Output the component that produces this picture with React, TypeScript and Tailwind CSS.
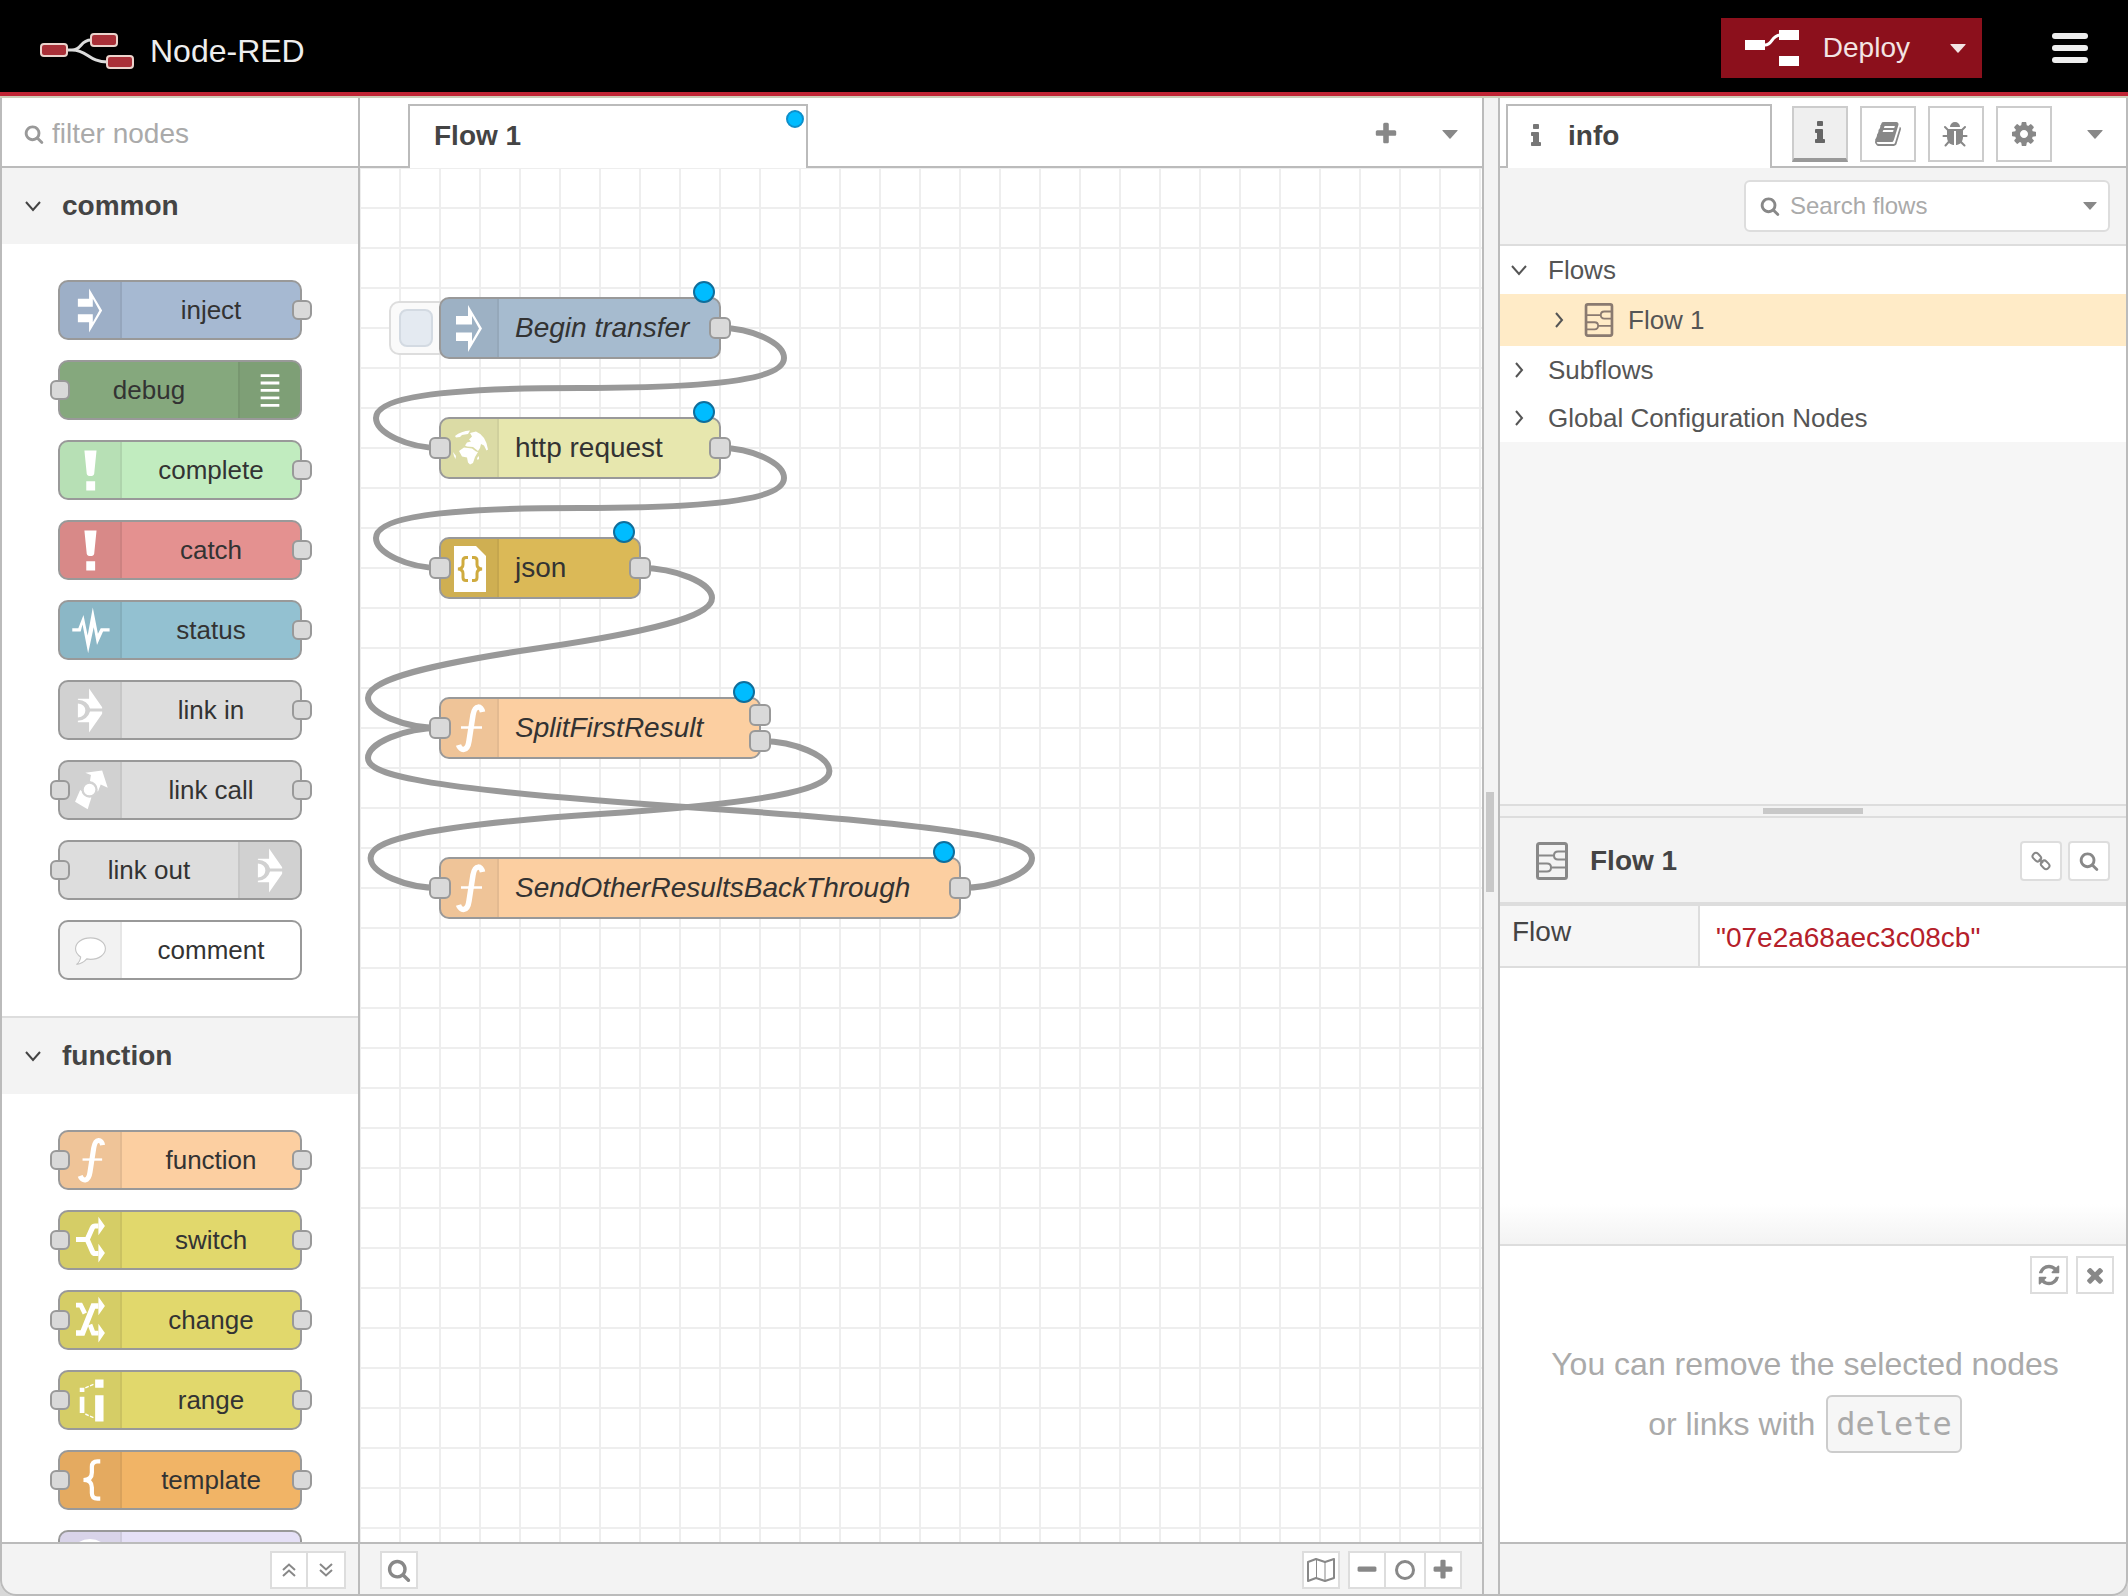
import type { ReactNode } from 'react'
import clsx from 'clsx'

type NodeIconName =
  | 'inject'
  | 'debug'
  | 'bang'
  | 'status'
  | 'link'
  | 'linkCall'
  | 'comment'
  | 'function'
  | 'switch'
  | 'change'
  | 'range'
  | 'template'
  | 'delay'
  | 'globe'
  | 'json'

type PaletteItem = {
  label?: string
  icon: NodeIconName
  color: string
  input?: boolean
  output?: boolean
  iconRight?: boolean
}

type FlowNode = {
  id: string
  label: string
  icon: NodeIconName
  color: string
  x: number
  y: number
  width: number
  italic?: boolean
  input?: boolean
  outputs: number[]
  button?: boolean
}

const NODE_HEIGHT = 60
const WIRE_UNIT = 200

const categories: { name: string; items: PaletteItem[] }[] = [
  {
    name: 'common',
    items: [
      { label: 'inject', icon: 'inject', color: 'bg-[#a6b9d2]', output: true },
      { label: 'debug', icon: 'debug', color: 'bg-[#85a87d]', input: true, iconRight: true },
      { label: 'complete', icon: 'bang', color: 'bg-[#c1ecbf]', output: true },
      { label: 'catch', icon: 'bang', color: 'bg-[#e49190]', output: true },
      { label: 'status', icon: 'status', color: 'bg-[#93c1d1]', output: true },
      { label: 'link in', icon: 'link', color: 'bg-[#dddddd]', output: true },
      { label: 'link call', icon: 'linkCall', color: 'bg-[#dddddd]', input: true, output: true },
      { label: 'link out', icon: 'link', color: 'bg-[#dddddd]', input: true, iconRight: true },
      { label: 'comment', icon: 'comment', color: 'bg-white' },
    ],
  },
  {
    name: 'function',
    items: [
      { label: 'function', icon: 'function', color: 'bg-[#fccfa1]', input: true, output: true },
      { label: 'switch', icon: 'switch', color: 'bg-[#e1d86c]', input: true, output: true },
      { label: 'change', icon: 'change', color: 'bg-[#e1d86c]', input: true, output: true },
      { label: 'range', icon: 'range', color: 'bg-[#e1d86c]', input: true, output: true },
      { label: 'template', icon: 'template', color: 'bg-[#f1b466]', input: true, output: true },
      { icon: 'delay', color: 'bg-[#e5e0f6]', input: true, output: true },
    ],
  },
]

// positions are relative to the top left corner of the canvas
const flowNodes: FlowNode[] = [
  { id: 'begin', label: 'Begin transfer', icon: 'inject', color: 'bg-[#a6bbcf]', x: 80, y: 130, width: 280, italic: true, outputs: [30], button: true },
  { id: 'http', label: 'http request', icon: 'globe', color: 'bg-[#e7e7ae]', x: 80, y: 250, width: 280, input: true, outputs: [30] },
  { id: 'json', label: 'json', icon: 'json', color: 'bg-[#dbb957]', x: 80, y: 370, width: 200, input: true, outputs: [30] },
  { id: 'split', label: 'SplitFirstResult', icon: 'function', color: 'bg-[#fccfa1]', x: 80, y: 530, width: 320, italic: true, input: true, outputs: [17, 43] },
  { id: 'send', label: 'SendOtherResultsBackThrough', icon: 'function', color: 'bg-[#fccfa1]', x: 80, y: 690, width: 520, italic: true, input: true, outputs: [30] },
]

const wires = [
  { from: 'begin', port: 0, to: 'http' },
  { from: 'http', port: 0, to: 'json' },
  { from: 'json', port: 0, to: 'split' },
  { from: 'send', port: 0, to: 'split' },
  { from: 'split', port: 1, to: 'send' },
]

// every wire here runs back to the left, so it loops round both ends
const wirePath = (x0: number, y0: number, x1: number, y1: number) => {
  const dx = x1 - x0
  const dy = y1 - y0
  const dir = dy > 0 ? 1 : -1
  const cp = NODE_HEIGHT / 2
  const near = Math.min(Math.abs(dx), Math.abs(dy))
  const scale = 0.4 - 0.2 * Math.max(0, (WIRE_UNIT - near) / WIRE_UNIT)
  const midX = Math.floor(x1 - dx / 2)
  const midY = Math.floor(y1 - dy / 2)
  const lowY = (y1 + midY) / 2
  const topX = x0 + WIRE_UNIT * scale
  const topY = dy > 0 ? Math.min(lowY - dy / 2, y0 + cp) : Math.max(lowY - dy / 2, y0 - cp)
  const bottomX = x1 - WIRE_UNIT * scale
  const bottomY = dy > 0 ? Math.max(lowY, y1 - cp) : Math.min(lowY, y1 + cp)
  const cx = (x0 + topX) / 2
  let topCp = dy > 0 ? Math.max(y0, topY - cp) : Math.min(y0, topY + cp)
  const midCp = dy > 0 ? Math.min(midY, topY + cp) : Math.max(midY, topY - cp)
  let bottomCp = dy > 0 ? Math.max(midY, bottomY - cp) : Math.min(midY, bottomY + cp)
  if (midCp === topY + dir * cp) {
    if (Math.abs(dy) < cp * 10) topCp = topY - (dir * cp) / 2
    bottomCp = bottomY - (dir * cp) / 2
  }
  return `M${x0} ${y0} C${cx} ${y0} ${topX} ${topCp} ${topX} ${topY} S${cx} ${midCp} ${midX} ${midY} S${bottomX} ${bottomCp} ${bottomX} ${bottomY} S${(x1 + bottomX) / 2} ${y1} ${x1} ${y1}`
}

const glyphs = {
  search:
    'M1216 832q0-185-131.5-316.5t-316.5-131.5-316.5 131.5-131.5 316.5 131.5 316.5 316.5 131.5 316.5-131.5 131.5-316.5zm512 832q0 52-38 90t-90 38q-54 0-90-38l-343-342q-179 124-399 124-143 0-273.5-55.5t-225-150-150-225-55.5-273.5 55.5-273.5 150-225 225-150 273.5-55.5 273.5 55.5 225 150 150 225 55.5 273.5q0 220-124 399l343 343q37 37 37 90z',
  info: 'M1216 1344v128q0 26-19 45t-45 19h-512q-26 0-45-19t-19-45v-128q0-26 19-45t45-19h64v-384h-64q-26 0-45-19t-19-45v-128q0-26 19-45t45-19h384q26 0 45 19t19 45v576h64q26 0 45 19t19 45zm-128-1152v192q0 26-19 45t-45 19h-256q-26 0-45-19t-19-45v-192q0-26 19-45t45-19h256q26 0 45 19t19 45z',
  book: 'M1703 478q40 57 18 129l-275 906q-19 64-76.5 107.5t-122.5 43.5h-923q-77 0-148.5-53.5t-99.5-131.5q-24-67-2-127 0-4 3-27t4-37q1-8-3-21.5t-3-19.5q2-11 8-21t16.5-23.5 16.5-23.5q23-38 45-91.5t30-91.5q3-10 .5-30t-.5-28q3-11 17-28t17-23q21-36 42-92t25-90q1-9-2.5-32t.5-28q4-13 22-30.5t22-22.5q19-26 42.5-84.5t27.5-96.5q1-8-3-25.5t-2-26.5q2-8 9-18t18-23 17-21q8-12 16.5-30.5t15-35 16-36 19.5-32 26.5-23.5 36-11.5 47.5 5.5l-1 3q38-9 51-9h761q74 0 114 56t18 130l-274 906q-36 119-71.5 153.5t-128.5 34.5h-869q-27 0-38 15-11 16-1 43 24 70 144 70h923q29 0 56-15.5t35-41.5l300-987q7-22 5-57 38 15 59 43zm-1064 2q-4 13 2 22.5t20 9.5h608q13 0 25.5-9.5t16.5-22.5l21-64q4-13-2-22.5t-20-9.5h-608q-13 0-25.5 9.5t-16.5 22.5zm-83 256q-4 13 2 22.5t20 9.5h608q13 0 25.5-9.5t16.5-22.5l21-64q4-13-2-22.5t-20-9.5h-608q-13 0-25.5 9.5t-16.5 22.5z',
  bug: 'M1632 1024q0 26-19 45t-45 19h-224q0 171-67 290l208 209q19 19 19 45t-19 45q-18 19-45 19t-45-19l-198-197q-5 5-15 13t-42 28.5-65 36.5-82 29-97 13v-896h-128v896q-51 0-101.5-13.5t-87-33-66-39-43.5-32.5l-15-14-183 207q-20 21-48 21-24 0-43-16-19-18-20.5-44.5t15.5-46.5l202-227q-58-114-58-274h-224q-26 0-45-19t-19-45 19-45 45-19h224v-294l-173-173q-19-19-19-45t19-45 45-19 45 19l173 173h844l173-173q19-19 45-19t45 19 19 45-19 45l-173 173v294h224q26 0 45 19t19 45zm-480-576h-640q0-133 93.5-226.5t226.5-93.5 226.5 93.5 93.5 226.5z',
  cog: 'M1152 896q0-106-75-181t-181-75-181 75-75 181 75 181 181 75 181-75 75-181zm512-109v222q0 12-8 23t-20 13l-185 28q-19 54-39 91 35 50 107 138 10 12 10 25t-9 23q-27 37-99 108t-94 71q-12 0-26-9l-138-108q-44 23-91 38-16 136-29 186-7 28-36 28h-222q-14 0-24.5-8.5t-11.5-21.5l-28-184q-49-16-90-37l-141 107q-10 9-25 9-14 0-25-11-126-114-165-168-7-10-7-23 0-12 8-23 15-21 51-66.5t54-70.5q-27-50-41-99l-183-27q-13-2-21-12.5t-8-23.5v-222q0-12 8-23t19-13l186-28q14-46 39-92-40-57-107-138-10-12-10-24 0-10 9-23 26-36 98.5-107.5t94.5-71.5q13 0 26 10l138 107q44-23 91-38 16-136 29-186 7-28 36-28h222q14 0 24.5 8.5t11.5 21.5l28 184q49 16 90 37l142-107q9-9 24-9 13 0 25 10 129 119 165 170 7 8 7 22 0 12-8 23-15 21-51 66.5t-54 70.5q26 50 41 98l183 28q13 2 21 12.5t8 23.5z',
  refresh:
    'M1639 1056q0 5-1 7-64 268-268 434.5t-478 166.5q-146 0-282.5-55t-243.5-157l-129 129q-19 19-45 19t-45-19-19-45v-448q0-26 19-45t45-19h448q26 0 45 19t19 45-19 45l-137 137q71 66 161 102t187 36q134 0 250-65t186-179q11-17 53-117 8-23 30-23h192q13 0 22.5 9.5t9.5 22.5zm25-800v448q0 26-19 45t-45 19h-448q-26 0-45-19t-19-45 19-45l138-138q-148-137-349-137-134 0-250 65t-186 179q-11 17-53 117-8 23-30 23h-199q-13 0-22.5-9.5t-9.5-22.5v-7q65-268 270-434.5t480-166.5q146 0 284 55.5t245 156.5l130-129q19-19 45-19t45 19 19 45z',
  times:
    'M1490 1322q0 40-28 68l-136 136q-28 28-68 28t-68-28l-294-294-294 294q-28 28-68 28t-68-28l-136-136q-28-28-28-68t28-68l294-294-294-294q-28-28-28-68t28-68l136-136q28-28 68-28t68 28l294 294 294-294q28-28 68-28t68 28l136 136q28 28 28 68t-28 68l-294 294 294 294q28 28 28 68z',
  plus: 'M1600 736v192q0 40-28 68t-68 28h-416v416q0 40-28 68t-68 28h-192q-40 0-68-28t-28-68v-416h-416q-40 0-68-28t-28-68v-192q0-40 28-68t68-28h416v-416q0-40 28-68t68-28h192q40 0 68 28t28 68v416h416q40 0 68 28t28 68z',
  minus: 'M1600 736v192q0 40-28 68t-68 28h-1216q-40 0-68-28t-28-68v-192q0-40 28-68t68-28h1216q40 0 68 28t28 68z',
}

const Glyph = ({ name, size }: { name: keyof typeof glyphs; size: number }) => (
  <svg width={size} height={size} viewBox="0 0 1792 1792" fill="currentColor" className="shrink-0" aria-hidden="true">
    <path d={glyphs[name]} />
  </svg>
)

const Caret = ({ width = 16 }: { width?: number }) => (
  <svg width={width} height={width / 2 + 1} viewBox="0 0 18 10" fill="currentColor" className="shrink-0" aria-hidden="true">
    <path d="M1 0h16q1 0 .4.9L9.6 9.6q-.6.6-1.2 0L.6.9Q0 0 1 0z" />
  </svg>
)

const Chevron = ({ open }: { open?: boolean }) => (
  <svg width="18" height="18" viewBox="0 0 18 18" fill="none" stroke="currentColor" strokeWidth="2" className="shrink-0" aria-hidden="true">
    <path d={open ? 'M2 5l7 8 7-8' : 'M6 2l6 7-6 7'} />
  </svg>
)

const FlowIcon = ({ className }: { className: string }) => (
  <svg viewBox="0 0 32 38" fill="none" stroke="currentColor" strokeWidth="2" className={clsx('shrink-0', className)} aria-hidden="true">
    <rect x="1.5" y="1.5" width="29" height="35" rx="2" strokeWidth="3" />
    <path d="M2 13.5h16M30 9.5h-8q-4 0-4 4t4 4h8" />
    <path d="M30 25.5H15M2 21.5h9q4 0 4 4t-4 4H2" />
  </svg>
)

const nodeIcons: Record<NodeIconName, ReactNode> = {
  inject: <path d="M17 18h12V7l14 23.500L29 54V43H17v-8.500h16V43l7-12.500L33 18v8.500H17z" />,
  debug: <path d="M20 13h20v3H20zM20 21h20v3H20zM20 29h20v3H20zM20 37h20v3H20zM20 45h20v3H20z" />,
  bang: <path d="M24 9h13l-2.500 25q-.5 2.500-4 2.500t-4-2.500zM26 42h9.500v10H26z" />,
  status: (
    <path d="M11 28h6.500L23 14l4.500 22L33 6l5.500 28 3-6H51v3.500h-7L37.500 46 34 27l-6 28-6-31-2 7.500h-9z" />
  ),
  link: (
    <>
      <path d="M17 18h12V7l14 20v1.500H30q-2.500-9-13-9.500z" />
      <path d="M17 43h12v11l14-20v-2.500H30q-2.500 9-13 10z" />
      <path d="M17 23q8 1 8 7.500T17 38z" />
    </>
  ),
  linkCall: (
    <>
      <path d="M25 11.500l18-2.500 6 18.500-7.500-3.500-3 8L30 20l1-6z" />
      <path d="M19.500 30L14 42.500l13.500 8 4-12.500z" />
      <circle cx="29.500" cy="29.500" r="7.500" stroke="#d2d2d2" strokeWidth="2.500" />
    </>
  ),
  comment: (
    <path
      d="M30.500 17c9 0 16 5 16 11.500S39.500 40 30.500 40q-2 0-4-.5-4 5-11 6 4-3 4.500-8-5.500-3.500-5.500-9C14.500 22 21.500 17 30.500 17z"
      stroke="#c4c4c4"
      strokeWidth="1.2"
    />
  ),
  function: (
    <g fill="none" stroke="currentColor">
      <path d="M43.500 14C42.500 8 36 6 34 17L30 43C28.500 54 21.500 53 19.500 47" strokeWidth="5.5" />
      <path d="M22 29.500h21" strokeWidth="2.500" />
    </g>
  ),
  switch: (
    <>
      <path d="M15 29.500h11M39 15h-3.500q-2 0-3 2L27 29.500 32.500 42q1 2.500 3 2.500H39" fill="none" stroke="currentColor" strokeWidth="5.5" />
      <path d="M39 5l7 10-7 10zM39 34l7 10-7 10z" />
    </>
  ),
  change: (
    <>
      <path d="M15 44h7l11.500-29H39" fill="none" stroke="currentColor" strokeWidth="6" />
      <path d="M15 14h5l4.500 9M30 35l3.500 9H39" fill="none" stroke="currentColor" strokeWidth="5" />
      <path d="M39 5l7 10-7 10zM39 34l7 10-7 10z" />
    </>
  ),
  range: (
    <>
      <path d="M19 17h5v4.500h-5zM19 26.500h5V44h-5zM35.500 8h9v9h-9zM35.500 25h9v28h-9z" />
      <path d="M25 17l9-4M25 45l9 4" fill="none" stroke="currentColor" strokeWidth="1.5" strokeDasharray="4 1.5" />
    </>
  ),
  template: (
    <path
      d="M41 10h-3q-6 0-6 6v6q0 8-9 8 9 0 9 8v6q0 6 6 6h3"
      fill="none"
      stroke="currentColor"
      strokeWidth="4.5"
    />
  ),
  delay: <circle cx="30" cy="30" r="20" fill="none" stroke="currentColor" strokeWidth="5" />,
  globe: (
    <>
      <path d="M16 18q6-5 15-5.500l-2 3.500-6 1-2 2-4 .5z" />
      <path d="M31 15l6-1.500q10 4 12 18l-1.500 1-2.500-5-3-1.500-1 4-2 3-5-4-6-.5-2-1 2-3 4-1-2-2 3-3z" />
      <path d="M20 33l5-3.500 8 1 4 3 2 .5-3 5-2 6-3 1.500-2-2-1-5-5-1z" />
      <path d="M14 34l3 4-.5 3q-2-3-2.500-7zM38 40l2-2v3l-1.500 1z" />
    </>
  ),
  json: (
    <>
      <path d="M15 8h22l10 10v36H15z" />
      <path
        d="M29 19.500h-2q-3 0-3 3v4q0 4-5 4.500 5 .5 5 4.500v4q0 3 3 3h2M33 19.500h2q3 0 3 3v4q0 4 5 4.500-5 .5-5 4.500v4q0 3-3 3h-2"
        fill="none"
        stroke="#cfab3f"
        strokeWidth="3"
      />
    </>
  ),
}

const NodeIcon = ({ name, className }: { name: NodeIconName; className: string }) => (
  <svg viewBox="0 0 60 60" fill="currentColor" className={clsx('shrink-0 text-white', className)} aria-hidden="true">
    {nodeIcons[name]}
  </svg>
)

const PaletteNode = ({ label, icon, color, input, output, iconRight }: PaletteItem) => (
  <li
    className={clsx(
      'relative flex h-[60px] w-[244px] rounded-[10px] border-2 border-[#999]',
      color,
      iconRight && 'flex-row-reverse',
    )}
  >
    <span
      className={clsx(
        'flex w-[62px] items-center justify-center border-black/5 bg-black/5',
        iconRight ? 'rounded-r-lg border-l-2' : 'rounded-l-lg border-r-2',
      )}
    >
      <NodeIcon name={icon} className="size-14" />
    </span>
    <span className="flex flex-1 items-center justify-center text-[26px] text-[#333]">{label}</span>
    {input ? <span className="absolute -left-[10px] top-[18px] size-5 rounded-md border-2 border-[#999] bg-[#d9d9d9]" /> : null}
    {output ? <span className="absolute -right-[12px] top-[18px] size-5 rounded-md border-2 border-[#999] bg-[#d9d9d9]" /> : null}
  </li>
)

const Header = () => (
  <header className="flex h-24 items-center justify-between border-b-4 border-[#c02434] bg-black px-10 pt-1">
    <div className="flex items-center gap-4 pt-1.5">
      <svg width="94" height="36" viewBox="0 0 94 36" aria-hidden="true">
        <path d="M28 17h4c10 0 8-10 19-10M32 17c16 0 16 12 36 12" fill="none" stroke="#dcdcdc" strokeWidth="3" />
        <g fill="#a93038" stroke="#ecd3cc" strokeWidth="2">
          <rect x="1" y="11" width="26" height="12" rx="3" />
          <rect x="51" y="1" width="26" height="12" rx="3" />
          <rect x="67" y="23" width="26" height="12" rx="3" />
        </g>
      </svg>
      <h1 className="text-[32px] text-[#eee]">Node-RED</h1>
    </div>
    <div className="flex items-center gap-[70px]">
      <div className="flex h-[60px] bg-[#8c101c] text-[#f3e4e4]">
        <button className="flex items-center gap-6 px-6 text-[28px]">
          <svg width="54" height="36" viewBox="0 0 54 36" fill="#fff" aria-hidden="true">
            <path d="M18 15h2c8 0 6-10 16-10" fill="none" stroke="#fff" strokeWidth="3" />
            <path d="M0 10h20v10H0zM34 0h20v10H34zM34 26h20v10H34z" />
          </svg>
          Deploy
        </button>
        <button className="flex w-12 items-center justify-center" aria-label="Deploy options">
          <Caret />
        </button>
      </div>
      <button className="flex flex-col gap-1.5" aria-label="Menu">
        <span className="h-1.5 w-9 rounded-sm bg-[#eee]" />
        <span className="h-1.5 w-9 rounded-sm bg-[#eee]" />
        <span className="h-1.5 w-9 rounded-sm bg-[#eee]" />
      </button>
    </div>
  </header>
)

const footerButton = 'flex h-[38px] w-[38px] items-center justify-center border-2 border-[#ddd] bg-white text-[#888]'

const Palette = () => (
  <aside className="flex w-[360px] shrink-0 flex-col overflow-hidden rounded-bl-2xl border-x-2 border-b-2 border-[#bbb] bg-[#f3f3f3]">
    <label className="flex h-[70px] shrink-0 items-center gap-2 border-b-2 border-[#bbb] bg-white pl-[22px] pt-1 text-[#999]">
      <Glyph name="search" size={20} />
      <input
        type="text"
        aria-label="filter nodes"
        placeholder="filter nodes"
        className="w-full min-w-0 bg-transparent text-[28px] outline-none placeholder:text-[#aaa]"
      />
    </label>
    <div className="min-h-0 flex-1 divide-y-2 divide-[#ddd] overflow-hidden bg-white">
      {categories.map((category) => (
        <section key={category.name}>
          <button className="flex h-[76px] w-full items-center gap-5 bg-[#f3f3f3] pl-[22px] text-[28px] font-bold text-[#444]">
            <Chevron open />
            {category.name}
          </button>
          <ul className="flex flex-col gap-5 py-9 pl-14">
            {category.items.map((item) => (
              <PaletteNode key={item.label ?? item.icon} {...item} />
            ))}
          </ul>
        </section>
      ))}
    </div>
    <footer className="flex h-[52px] shrink-0 items-center justify-end border-t-2 border-[#bbb] pr-3 pt-0.5">
      <button className={footerButton} aria-label="Collapse all">
        <svg width="14" height="14" viewBox="0 0 14 14" fill="none" stroke="currentColor" strokeWidth="2" aria-hidden="true">
          <path d="M1 7l6-5.500L13 7M1 13l6-5.500L13 13" />
        </svg>
      </button>
      <button className={clsx(footerButton, 'border-l-0')} aria-label="Expand all">
        <svg width="14" height="14" viewBox="0 0 14 14" fill="none" stroke="currentColor" strokeWidth="2" aria-hidden="true">
          <path d="M1 1l6 5.500L13 1M1 7l6 5.500L13 7" />
        </svg>
      </button>
    </footer>
  </aside>
)

const CanvasNode = ({ node }: { node: FlowNode }) => (
  <div className="absolute h-[62px]" style={{ left: node.x - 1, top: node.y - 1, width: node.width + 2 }}>
    {node.button ? (
      <button
        className="absolute -left-[50px] top-1 flex h-[54px] w-[66px] items-center rounded-[10px] border-2 border-[#ddd] bg-[#fafafa] pl-2"
        aria-label="Inject"
      >
        <span className="h-[38px] w-[34px] rounded-lg border-2 border-[#d3dae2] bg-[#e4eaf1]" />
      </button>
    ) : null}
    <div className={clsx('relative flex h-full rounded-[10px] border-2 border-[#999]', node.color)}>
      <span className="flex w-[58px] shrink-0 items-center justify-center rounded-l-lg border-r-2 border-black/5 bg-black/5">
        <NodeIcon name={node.icon} className="size-[60px]" />
      </span>
      <span className={clsx('flex items-center whitespace-nowrap pl-4 text-[28px] text-[#333]', node.italic && 'italic')}>
        {node.label}
      </span>
    </div>
    {node.input ? <span className="absolute -left-[10px] top-5 size-[22px] rounded-md border-2 border-[#999] bg-[#d9d9d9]" /> : null}
    {node.outputs.map((y) => (
      <span
        key={y}
        className="absolute -right-[10px] size-[22px] rounded-md border-2 border-[#999] bg-[#d9d9d9]"
        style={{ top: y - 10 }}
      />
    ))}
    <span className="absolute -top-4 right-[6px] size-[22px] rounded-full border-2 border-[#0f6e9c] bg-[#00bcff]" />
  </div>
)

const Workspace = () => {
  const byId = (id: string) => flowNodes.find((node) => node.id === id)!

  return (
    <main className="flex min-w-0 flex-1 flex-col border-b-2 border-r-2 border-[#bbb] bg-white">
      <div className="flex h-[70px] shrink-0">
        <div className="w-12 border-b-2 border-[#bbb]" />
        <div className="flex w-[400px] flex-col pt-1.5">
          <button className="relative flex flex-1 items-center border-x-2 border-t-2 border-[#bbb] bg-white pb-0.5 pl-6 text-[28px] font-bold text-[#444]">
            Flow 1
            <span className="absolute right-0.5 top-1 size-[18px] rounded-full border-2 border-[#0f8fca] bg-[#00bcff]" />
          </button>
        </div>
        <div className="flex flex-1 justify-end border-b-2 border-[#bbb] pt-1 text-[#888]">
          <button className="flex w-16 items-center justify-center" aria-label="Add flow">
            <Glyph name="plus" size={26} />
          </button>
          <button className="flex w-16 items-center justify-center" aria-label="List flows">
            <Caret />
          </button>
        </div>
      </div>
      <div className="relative min-h-0 flex-1 overflow-hidden bg-[linear-gradient(to_right,#eee_2px,transparent_2px),linear-gradient(to_bottom,#eee_2px,transparent_2px)] bg-[position:-1px_-1px] bg-[size:40px_40px]">
        <svg className="absolute inset-0 h-full w-full" fill="none" stroke="#999" strokeWidth="6" aria-hidden="true">
          {wires.map(({ from, port, to }) => {
            const source = byId(from)
            const target = byId(to)
            return (
              <path
                key={from + to}
                d={wirePath(source.x + source.width, source.y + source.outputs[port], target.x, target.y + NODE_HEIGHT / 2)}
              />
            )
          })}
        </svg>
        {flowNodes.map((node) => (
          <CanvasNode key={node.id} node={node} />
        ))}
      </div>
      <footer className="flex h-[52px] shrink-0 items-center border-t-2 border-[#bbb] bg-[#f3f3f3] px-5 pt-0.5">
        <button className={footerButton} aria-label="Search">
          <Glyph name="search" size={24} />
        </button>
        <button className={clsx(footerButton, 'ml-auto mr-2')} aria-label="Toggle navigator">
          <svg width="28" height="24" viewBox="0 0 28 24" fill="none" stroke="currentColor" strokeWidth="2" strokeLinejoin="round" className="shrink-0" aria-hidden="true">
            <path d="M1 4l8-3 9 3 9-3v19l-9 3-9-3-8 3z" />
            <path d="M9.500 1v19M18 4v19" strokeWidth="1" />
          </svg>
        </button>
        <button className={footerButton} aria-label="Zoom out">
          <Glyph name="minus" size={24} />
        </button>
        <button className={clsx(footerButton, 'border-x-0')} aria-label="Reset zoom">
          <span className="size-5 rounded-full border-3 border-[#888]" />
        </button>
        <button className={footerButton} aria-label="Zoom in">
          <Glyph name="plus" size={24} />
        </button>
      </footer>
    </main>
  )
}

const sidebarTabs = ['info', 'book', 'bug', 'cog'] as const

const SidebarTabs = () => (
  <div className="flex h-[70px] shrink-0 bg-white">
    <div className="w-1.5 shrink-0 border-b-2 border-[#bbb]" />
    <div className="flex w-[266px] shrink-0 flex-col pt-1.5">
      <button className="flex flex-1 items-center gap-[18px] border-x-2 border-t-2 border-[#bbb] pb-0.5 pl-[14px] text-[28px] font-bold text-[#444]">
        <span className="text-[#777]">
          <Glyph name="info" size={28} />
        </span>
        info
      </button>
    </div>
    <div className="flex min-w-0 flex-1 items-center gap-3 border-b-2 border-[#bbb] pl-5 pt-1 text-[#888]">
      {sidebarTabs.map((tab) => (
        <button
          key={tab}
          aria-label={tab}
          className={clsx(
            'flex h-14 w-14 shrink-0 items-center justify-center border-2 border-[#ccc]',
            tab === 'info' ? 'border-b-4 border-b-[#999] bg-[#efefef] text-[#666]' : 'bg-white',
          )}
        >
          <Glyph name={tab} size={28} />
        </button>
      ))}
      <button className="flex flex-1 items-center justify-center self-stretch" aria-label="More tabs">
        <Caret />
      </button>
    </div>
  </div>
)

const Tree = () => (
  <ul className="bg-white text-[26px] text-[#555]">
    <li>
      <button className="flex h-12 w-full items-center gap-5 pl-[10px]">
        <Chevron open />
        Flows
      </button>
      <ul>
        <li>
          <button className="flex h-[52px] w-full items-center bg-[#ffebc7] pl-[50px]">
            <Chevron />
            <FlowIcon className="ml-4 h-[34px] w-[30px] text-[#8a7a70]" />
            <span className="pl-[14px]">Flow 1</span>
          </button>
        </li>
      </ul>
    </li>
    {['Subflows', 'Global Configuration Nodes'].map((label) => (
      <li key={label}>
        <button className="flex h-12 w-full items-center gap-5 pl-[10px]">
          <Chevron />
          {label}
        </button>
      </li>
    ))}
  </ul>
)

const Sidebar = () => (
  <aside className="flex w-[630px] shrink-0 flex-col overflow-hidden rounded-br-2xl border-x-2 border-b-2 border-[#bbb] bg-[#f3f3f3]">
    <SidebarTabs />
    <section className="flex min-h-0 grow-[636] basis-0 flex-col bg-[#f6f6f6]">
      <div className="flex justify-end border-b-2 border-[#ddd] bg-[#f3f3f3] py-3 pr-4">
        <div className="flex h-[52px] w-[366px] items-center rounded-md border-2 border-[#ddd] bg-white pl-[14px] text-[#888]">
          <Glyph name="search" size={20} />
          <input
            type="text"
            aria-label="Search flows"
            placeholder="Search flows"
            className="w-full min-w-0 bg-transparent pl-[10px] text-2xl outline-none placeholder:text-[#aaa]"
          />
          <button className="flex w-9 shrink-0 items-center justify-center" aria-label="Search options">
            <Caret width={14} />
          </button>
        </div>
      </div>
      <Tree />
    </section>
    <div className="flex h-[14px] shrink-0 items-center justify-center border-y-2 border-[#ddd]">
      <div className="h-1.5 w-[100px] bg-[#c8c8c8]" />
    </div>
    <section className="flex min-h-0 grow-[426] basis-0 flex-col bg-white">
      <div className="flex h-[86px] shrink-0 items-center gap-[6px] border-b-2 border-[#ddd] bg-[#f3f3f3] pl-9 pr-4 pt-0.5 text-[#888]">
        <FlowIcon className="h-[38px] w-8" />
        <h2 className="flex-1 pl-4 text-[28px] font-bold text-[#444]">Flow 1</h2>
        <button className="flex h-10 w-[42px] items-center justify-center rounded border-2 border-[#ddd] bg-white" aria-label="Copy link">
          <svg width="20" height="20" viewBox="0 0 20 20" fill="none" stroke="currentColor" strokeWidth="2" aria-hidden="true">
            <rect x="1.500" y="3" width="9" height="6.500" rx="3" transform="rotate(45 6 6)" />
            <rect x="9.500" y="10.500" width="9" height="6.500" rx="3" transform="rotate(45 14 14)" />
            <path d="M8 8l4 4" />
          </svg>
        </button>
        <button className="flex h-10 w-[42px] items-center justify-center rounded border-2 border-[#ddd] bg-white" aria-label="Find">
          <Glyph name="search" size={20} />
        </button>
      </div>
      <table className="w-full text-left text-[28px]">
        <tbody>
          <tr className="h-[62px] border-y-2 border-[#ddd]">
            <th scope="row" className="w-[199px] border-r-2 border-[#ddd] bg-[#f6f6f6] pb-2 pl-3 font-normal text-[#444]">
              Flow
            </th>
            <td className="pl-4 pt-1 text-[#b5202a]">"07e2a68aec3c08cb"</td>
          </tr>
        </tbody>
      </table>
      <div className="mt-auto h-10 bg-linear-to-b from-white to-[#f3f3f3]" />
    </section>
    <section className="border-t-2 border-[#ddd] bg-white pb-[88px] pt-[10px] text-[#aaa]">
      <div className="flex justify-end gap-2 pr-3 text-[#888]">
        <button className={footerButton} aria-label="Next tip">
          <Glyph name="refresh" size={24} />
        </button>
        <button className={footerButton} aria-label="Close tips">
          <Glyph name="times" size={24} />
        </button>
      </div>
      <p className="mt-10 pr-4 text-center text-[32px] leading-[60px]">
        You can remove the selected nodes
        <br />
        or links with{' '}
        <kbd className="ml-0.5 rounded-md border-2 border-[#ccc] bg-[#f6f6f6] px-2 py-2 font-['DejaVu_Sans_Mono',monospace] text-[32px]">
          delete
        </kbd>
      </p>
    </section>
    <footer className="h-[52px] shrink-0 border-t-2 border-[#bbb]" />
  </aside>
)

export default function App() {
  return (
    <div className="flex h-screen flex-col bg-[#d8d8d8] font-['Liberation_Sans',Arial,sans-serif]">
      <Header />
      <div className="flex min-h-0 flex-1 overflow-hidden rounded-b-2xl border-t-2 border-[#cfcbb8]">
        <Palette />
        <Workspace />
        <div className="flex w-[14px] shrink-0 items-center justify-end border-b-2 border-[#bbb] bg-[#f3f3f3] pb-2 pr-1">
          <div className="h-[100px] w-2 bg-[#c8c8c8]" />
        </div>
        <Sidebar />
      </div>
    </div>
  )
}
